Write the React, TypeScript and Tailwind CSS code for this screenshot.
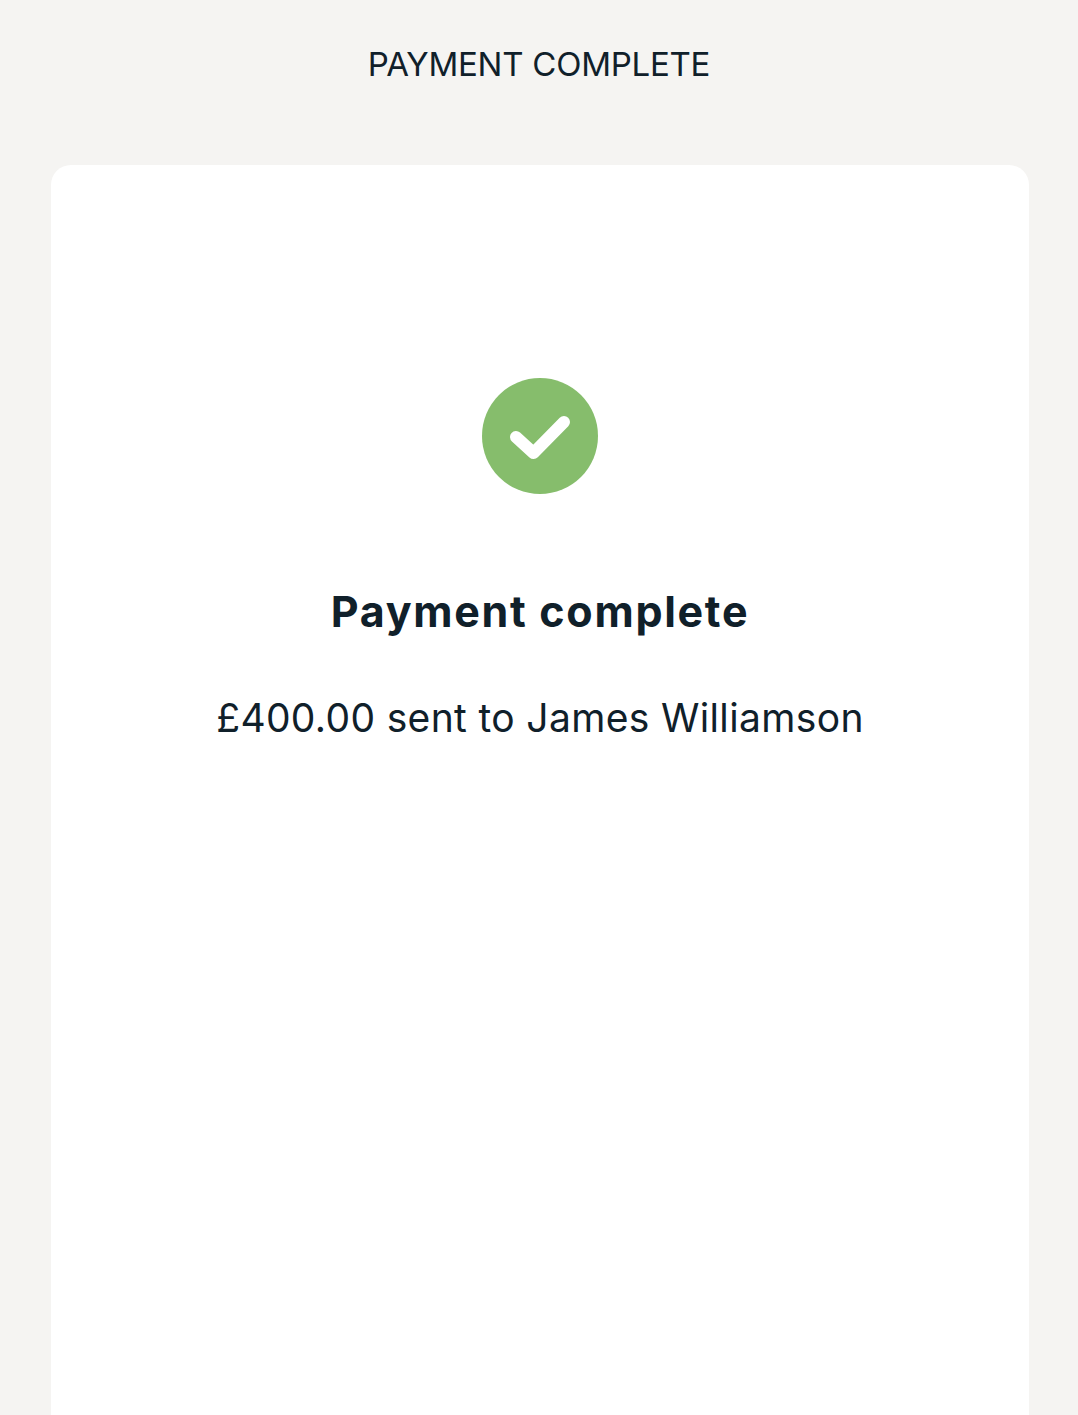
export default function App() {
  return (
    <div className="h-[1415px] overflow-hidden bg-[#f5f4f2] pl-[51px] pr-[49px] text-[#10202a] font-['Inter',sans-serif]">
      <h1 className="pt-[44px] text-center text-[33px] leading-[40px] font-normal tracking-[-0.25px] mb-[81px] -translate-x-px">
        PAYMENT COMPLETE
      </h1>
      <div className="h-[1300px] rounded-t-[20px] bg-white pt-[213px] flex flex-col items-center">
        <div className="w-[116px] h-[116px] rounded-full bg-[#86bd6c] flex items-center justify-center">
          <svg width="116" height="116" viewBox="0 0 116 116" fill="none">
            <path d="M34 59L51.5 75L82 44" stroke="white" strokeWidth="12" strokeLinecap="round" strokeLinejoin="round" />
          </svg>
        </div>
        <h2 className="mt-[92px] text-[43px] leading-[50px] font-bold tracking-[1.7px]">Payment complete</h2>
        <p className="mt-[58px] text-[39px] leading-[48px] font-normal tracking-[0.35px]">£400.00 sent to James Williamson</p>
      </div>
    </div>
  );
}
